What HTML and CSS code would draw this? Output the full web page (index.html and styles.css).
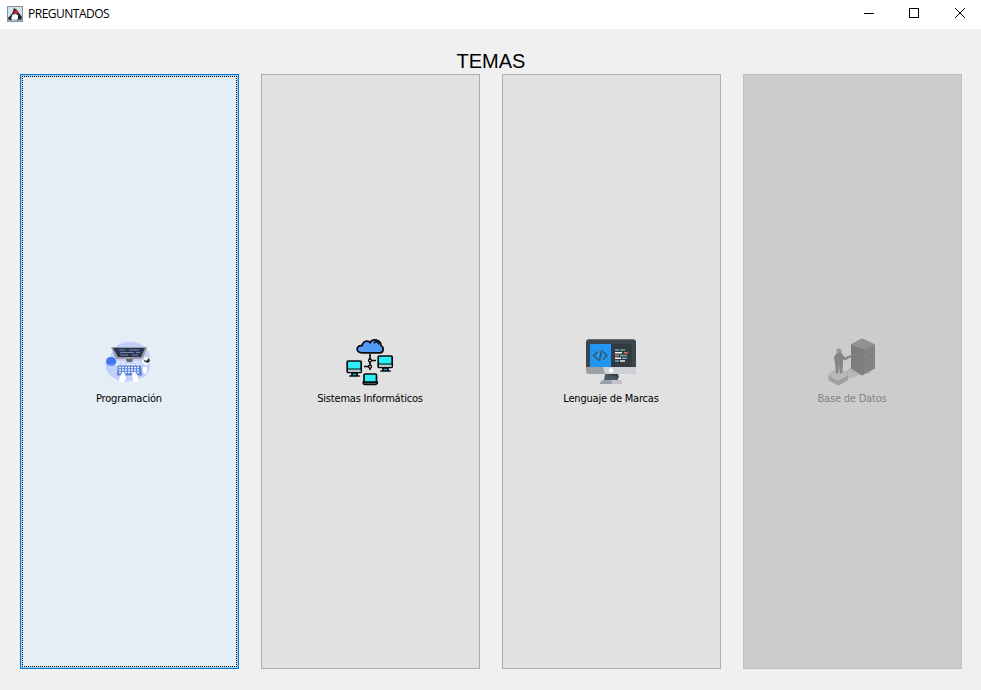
FILE: index.html
```html
<!DOCTYPE html>
<html lang="es">
<head>
<meta charset="utf-8">
<title>PREGUNTADOS</title>
<link rel="stylesheet" href="styles.css">
</head>
<body>
<header class="titlebar">
  <svg class="app-icon" viewBox="0 0 16 16">
    <rect width="16" height="16" fill="#8195a5"/>
    <rect x="1" y="1" width="14" height="14" fill="#d5e1ea"/>
    <path d="M1 11h14v4H1z" fill="#a8b8c5"/>
    <path d="M5.500 7 7 2l3 2 2 3 3 4-1 3-3-1H5l-3 1-1-2 2-2z" fill="#20262b"/>
    <path d="M5.500 8.500 8 8l3 1v4l-2 1-1.500-1L5 14l-1-1z" fill="#fff"/>
    <path d="m3 14 2-1m5 1 2-1" stroke="#20262b"/>
    <circle cx="9" cy="6.200" r="1.900" fill="#e3202b"/>
  </svg>
  <span class="window-title">PREGUNTADOS</span>
  <div class="controls">
    <svg viewBox="0 0 46 28"><path d="M12 13.500h10" /></svg>
    <svg viewBox="0 0 46 28"><path d="M11.500 8.500h9v9h-9z"/></svg>
    <svg viewBox="0 0 46 28"><path class="diagonal" d="m11.200 8.200 9.600 9.600m0-9.600-9.600 9.600"/></svg>
  </div>
</header>
<main>
  <h1>TEMAS</h1>
  <div class="topics">
    <button class="topic focused">
      <svg class="icon" viewBox="0 0 50 50">
        <path d="M14 9C22 4 34 5 41 11c6 5 5 12 5 19 0 8-8 14-17 14-6 2-13 3-17-1C4 40-1 31 3 25c4-5 5-12 11-16z" fill="#c0d0fb"/>
        <ellipse cx="7" cy="25.500" rx="5" ry="4.500" fill="#3f74ee"/>
        <path d="M4 29h6" stroke="#8ba9f3"/>
        <path d="M7 11h36l-4 12H12z" fill="#9b9b9e"/>
        <path d="M9 12h32l-4 9H14z" fill="#263456"/>
        <path d="M15 14h6m4 0h10M16 16.500h14m2 0h4M16 19h8m4 0h6" stroke="#7885a3"/>
        <path d="M22 23h7l-1 3h-5z" fill="#66676e"/>
        <path d="M13 26h8m9 0h6M12 28.500h26" stroke="#eef2fd" stroke-width="1.500" stroke-dasharray="4 1"/>
        <path d="M14 29.500h23l1 10H13z" fill="#5d82da"/>
        <path d="M15 31.500h20M15 34h20M15 36.500h20" stroke="#e9f0ff" stroke-width="1.500" stroke-dasharray="2 1"/>
        <path d="m15 44 2-6 3-2 1 2 1 5-3 4-4-2zm20 1-2-7-4-2-1 3 1 5 2 2zM39 31h4v5l-2 2-2-2z" fill="#fff"/>
        <circle cx="42" cy="25" r="4" fill="#f7f8fb"/>
        <path d="m39 23 3 2 3-3 1 3-2 2-3-1z" fill="#222e44"/>
      </svg>
      <span>Programación</span>
    </button>
    <button class="topic">
      <svg class="icon" viewBox="0 0 50 50">
        <g stroke="#080b0d" stroke-width="1.700" stroke-linejoin="round">
          <path d="M25 18v16M19 30.500h6M25 24.500h6" fill="none"/>
          <path d="M17 16.800c-7 0-6-8 0-7 1-5 6-6 8-3 3-5 11-3 11 3 3 1 3 7-1 7z" fill="#519bf5"/>
          <path d="M29 7.500c1-3 4-2 5 1" fill="none" stroke-width="1.400"/>
          <g id="monitor">
            <rect x="2.200" y="25" width="14" height="11.500" rx="1" fill="#2cf0f5"/>
            <path d="M3 33.500h12.500v2.500H3z" fill="#bbc6c9" stroke="none"/>
            <path d="M2.500 33h13.500" stroke-width="1"/>
            <path d="M7 37h5v3h2H5h2z" fill="#0cabb8"/>
          </g>
          <use href="#monitor" x="31" y="-5"/>
          <rect x="19" y="38" width="12.500" height="9" rx="1" fill="#2cf0f5"/>
          <path d="M18.300 46.200h13.900v1.200q-.5 1-2 1H20q-1.500 0-1.700-1z" fill="#8f9fa1"/>
          <circle cx="25" cy="24.500" r="1.500" stroke-width="1.300" fill="#ffd77b"/>
          <circle cx="25" cy="30.700" r="1.500" stroke-width="1.300" fill="#ffd77b"/>
        </g>
      </svg>
      <span>Sistemas Informáticos</span>
    </button>
    <button class="topic">
      <svg class="icon" viewBox="0 0 50 50">
        <path d="M3 3.200h44q3 0 3 3V31H0V6.200q0-3 3-3z" fill="#3b464f"/>
        <path d="M25 8h21v23H25z" fill="#323a42"/>
        <path d="M4 8h21v23H4z" fill="#2196f3"/>
        <path d="M0 31h50v4q0 3-3 3H3q-3 0-3-3z" fill="#9d9fa7"/>
        <path d="M17 31h33v4q0 3-3 3H19z" fill="#ced0d5"/>
        <circle cx="25" cy="34.500" r="2.200" fill="#fff"/>
        <path d="M19 38h13v7H18z" fill="#4c5a64"/>
        <path d="M21 38h11l1 4z" fill="#35434c"/>
        <path d="M17 44h16q3 1 3 4H14q0-3 3-4z" fill="#99a0ac"/>
        <path d="M25 44h8q3 1 3 4H26z" fill="#c1c4ca"/>
        <path d="m12 15.500-4.500 4 4.500 4M17 15.500l4 4-4 4M15.800 14l-2.500 11" fill="none" stroke="#39515f" stroke-width="1.400"/>
        <g fill="none" stroke-width="1.600">
          <path d="M29 14h4M29 19.500h4M36 22.300h5M29 25h4" stroke="#62a4dc"/>
          <path d="M34 14h5M34 19.500h7" stroke="#6bb37c"/>
          <path d="M29 16.700h7m-7 5.600h6m-1 2.700h5" stroke="#f2f2ef"/>
          <path d="M38 16.700h4M29 19.500h3" stroke="#df6670"/>
        </g>
      </svg>
      <span>Lenguaje de Marcas</span>
    </button>
    <button class="topic" disabled>
      <svg class="icon" viewBox="2 -0.500 50 50">
        <path d="m3 38 10-7 7 4 10-7 17 8-21 5-8 5z" fill="#b5b5b5"/>
        <path d="m3 39 11-6 9 6v5l-10 5-9-5z" fill="#a0a0a0"/>
        <path d="m3 39 11-6 9 6-10 5z" fill="#b9b9b9"/>
        <path d="m26 8 11-6 13 6v24L37 39l-11-7z" fill="#848484"/>
        <path d="m26 8 11-6 13 6-12 5z" fill="#929292"/>
        <path d="M26 8l12 5v26l-12-7z" fill="#7e7e7e"/>
        <path d="m27 13 11 5 11-5M27 19l11 5 11-5M27 25l11 5 11-5M38 13v25" fill="none" stroke="#777" stroke-width=".6"/>
        <circle cx="14" cy="14.500" r="2.500" fill="#989898"/>
        <path d="m11 17 5-1 4 5 7-3v2l-7 4-2-1v6l-1 8h-2l-1-8-1 8h-2l-1-10-1-6z" fill="#858585"/>
      </svg>
      <span>Base de Datos</span>
    </button>
  </div>
</main>
</body>
</html>
```
FILE: styles.css
```css
* { box-sizing: border-box; }
body {
  margin: 0;
  height: 690px;
  overflow: hidden;
  display: flex;
  flex-direction: column;
  background: #f0f0f0;
  color: #000;
}
.titlebar {
  height: 29px;
  flex: none;
  display: flex;
  align-items: center;
  padding: 0 0 2px 7px;
  overflow: hidden;
  background: #fff;
  font: 12px/20px "Open Sans", sans-serif;
}
.app-icon { width: 16px; height: 16px; margin-right: 5px; }
.window-title { letter-spacing: -.5px; }
.controls { display: flex; margin: 0 -9px 0 auto; }
.controls svg {
  width: 46px;
  height: 28px;
  fill: none;
  stroke: #000;
  stroke-width: 1;
  shape-rendering: crispEdges;
}
.controls .diagonal { shape-rendering: auto; }
main {
  flex: 1;
  display: flex;
  flex-direction: column;
  padding: 20px 19px 21px 20px;
}
h1 {
  margin: 0;
  height: 25px;
  text-align: center;
  font: 20px/25px "Liberation Sans", sans-serif;
}
.topics {
  flex: 1;
  display: grid;
  grid-template-columns: repeat(4, 219px);
  gap: 22px;
}
.topic {
  display: flex;
  flex-direction: column;
  align-items: center;
  justify-content: center;
  padding: 0 1px 1px 0;
  border: 1px solid #adadad;
  border-radius: 0;
  background: #e1e1e1;
  color: #000;
  font: 11px/14px "DejaVu Sans Condensed", "DejaVu Sans", sans-serif;
}
.icon { width: 50px; height: 50px; margin-bottom: 6px; }
.topic span { letter-spacing: -.2px; }
.focused {
  border-color: #0078d7;
  background: #e5edf5;
  box-shadow: inset 0 0 0 1px #a6d1f5;
  outline: 1px dotted #000;
  outline-offset: -3px;
}
.topic:disabled {
  border-color: #bfbfbf;
  background: #ccc;
  color: #838383;
}
```
